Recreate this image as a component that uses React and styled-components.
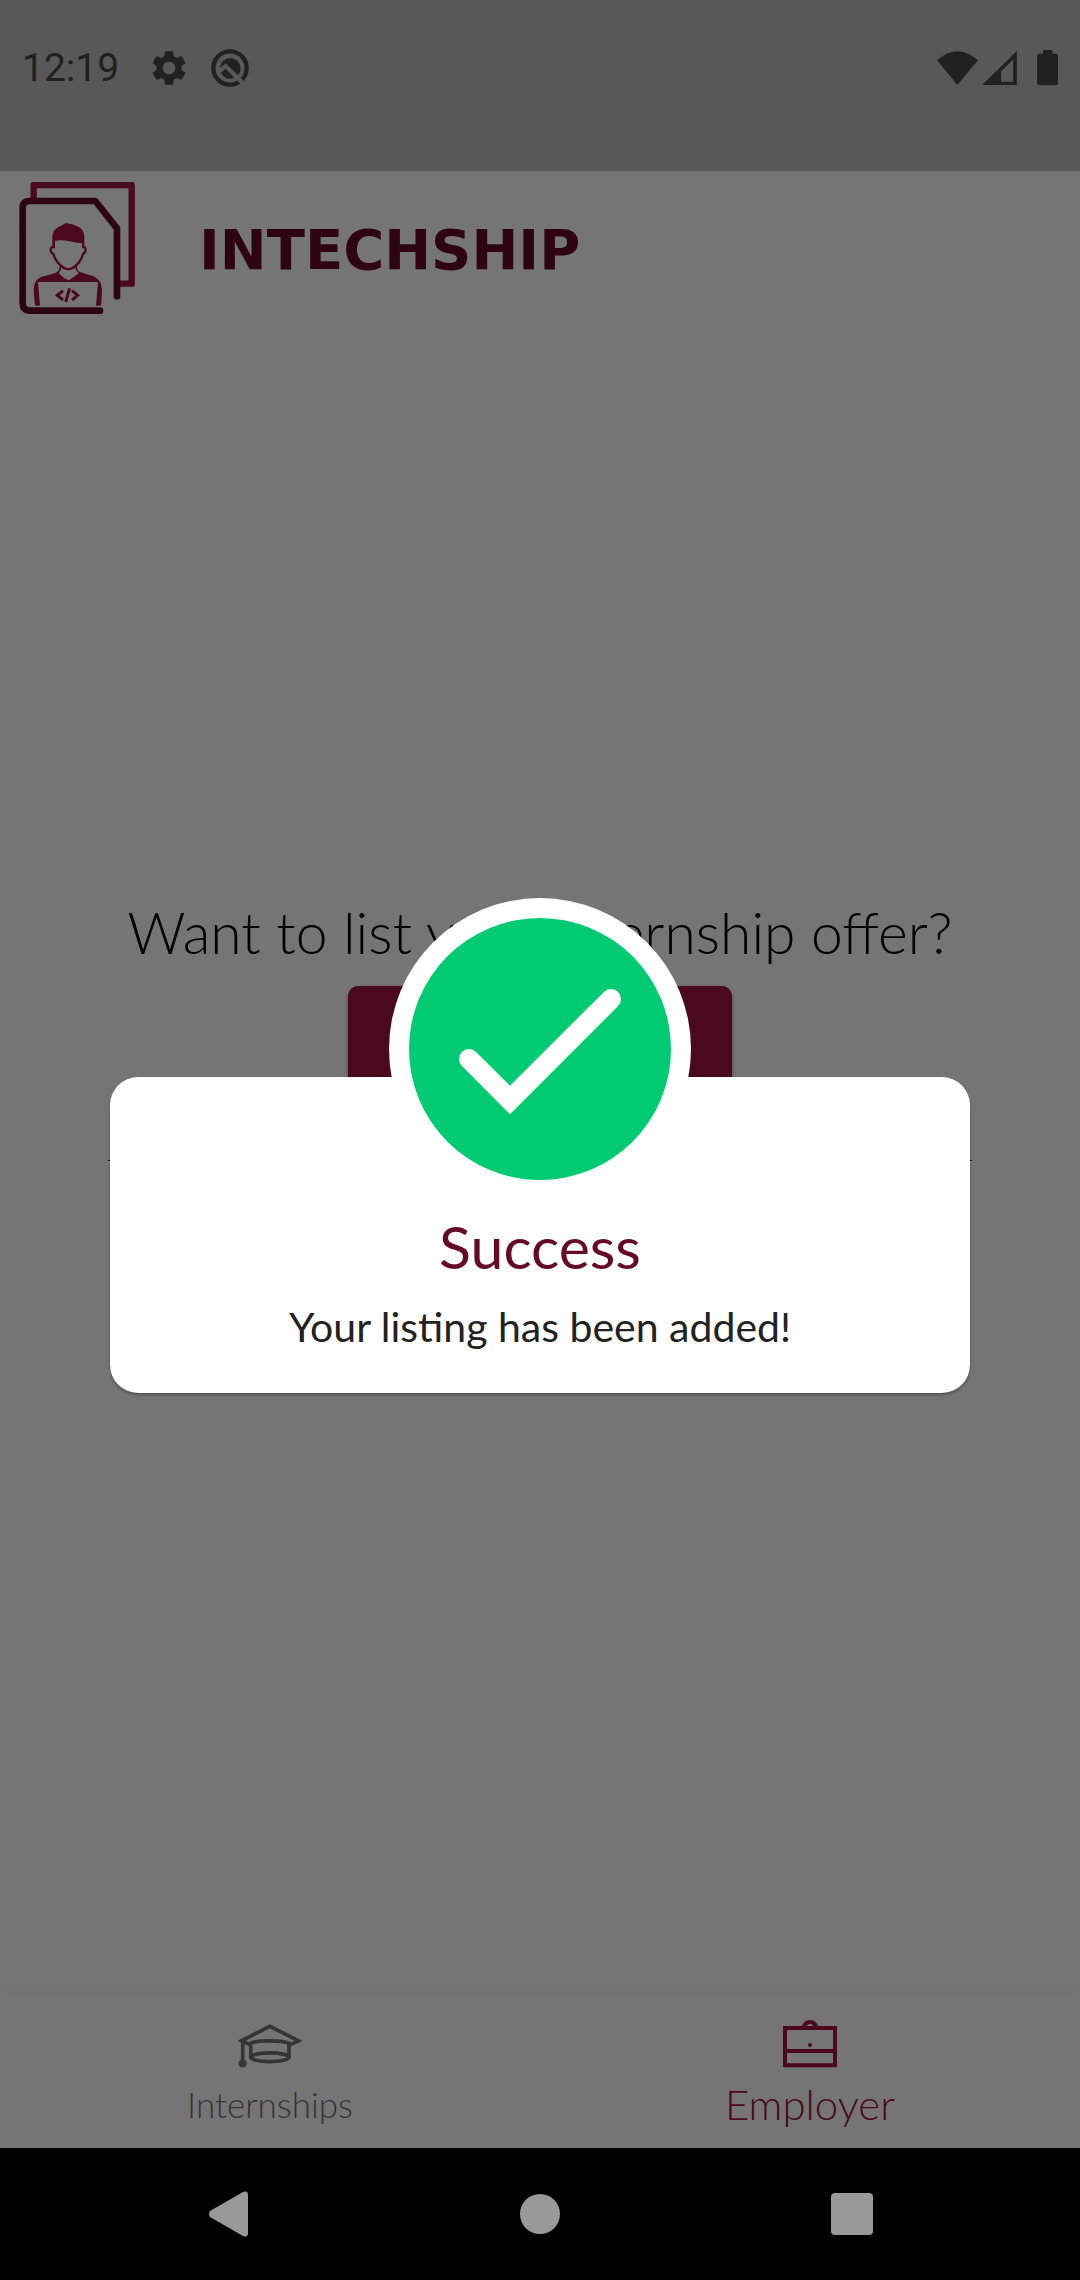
import React from "react";
import styled, { createGlobalStyle } from "styled-components";

const color = {
  ink: "#494949",
  statusBar: "#c0c0c0",
  primary: "#a2143f",
  dark: "#640a27",
  muted: "#747474",
  success: "#00cb72",
};

const GlobalStyle = createGlobalStyle`
  *, *::before, *::after { box-sizing: border-box; }
  body { margin: 0; background: #000; }
  body, button { font-family: Lato, "Open Sans", sans-serif; font-weight: 300; }
  h1, h2, p { margin: 0; font-weight: inherit; }
  button { border: 0; padding: 0; background: none; color: inherit; cursor: pointer; }
  svg { display: block; }
`;

const Device = styled.div`
  min-height: 100vh;
  display: flex;
  flex-direction: column;
`;

const Screen = styled.div`
  position: relative;
  flex: 1;
  display: flex;
  flex-direction: column;
  background: #fff;
`;

const StatusBar = styled.div`
  display: flex;
  justify-content: space-between;
  align-items: center;
  height: 171px;
  padding: 0 22px 36px;
  background: ${color.statusBar};
  color: ${color.ink};
`;

const StatusGroup = styled.div`
  display: flex;
  align-items: center;
  gap: ${(p) => p.$gap}px;
`;

const Clock = styled.time`
  margin-right: 8px;
  font: 400 39px/48px Roboto, sans-serif;
`;

const Header = styled.header`
  display: flex;
  align-items: center;
  gap: 64px;
  height: 156px;
  padding: 0 19px 2px;
`;

const Brand = styled.span`
  padding-top: 4px;
  font: 700 56px/64px "DejaVu Sans", sans-serif;
  color: ${color.dark};
`;

const Main = styled.main`
  flex: 1;
  display: grid;
  grid-template-rows: 1fr 1px 1fr;
  padding: 0 108px;
`;

const OfferPrompt = styled.section`
  display: flex;
  flex-direction: column;
  justify-content: flex-end;
  align-items: center;
  gap: 20px;
  padding-bottom: 44px;
`;

const PromptTitle = styled.h1`
  font-size: 57px;
  line-height: 68px;
  color: #000;
  white-space: nowrap;
`;

const ListButton = styled.button`
  width: 384px;
  height: 130px;
  border-radius: 10px;
  background: ${color.primary};
  box-shadow: 0 2px 4px rgba(0, 0, 0, 0.4);
`;

const Divider = styled.hr`
  width: 100%;
  height: 1px;
  margin: 0;
  border: 0;
  background: #222;
`;

const TabBar = styled.nav`
  display: grid;
  grid-template-columns: 1fr 1fr;
  height: 155px;
  background: #fff;
  box-shadow: 0 -4px 16px rgba(0, 0, 0, 0.04);
`;

const Tab = styled.button`
  display: flex;
  flex-direction: column;
  align-items: center;
  justify-content: flex-end;
  gap: 12px;
  padding-bottom: 20px;
  font-size: ${(p) => (p.$active ? 42 : 35)}px;
  line-height: 48px;
  color: ${(p) => (p.$active ? color.primary : color.muted)};
`;

const Scrim = styled.div`
  position: absolute;
  inset: 0;
  display: flex;
  align-items: center;
  justify-content: center;
  padding: 143px 110px 0;
  background: rgba(0, 0, 0, 0.54);
`;

const Dialog = styled.section`
  width: 100%;
  display: flex;
  flex-direction: column;
  align-items: center;
`;

const Badge = styled.div`
  z-index: 1;
  margin-bottom: -123px;
`;

const Card = styled.div`
  width: 100%;
  padding: 136px 24px 38px;
  border-radius: 28px;
  background: #fff;
  box-shadow: 0 2px 3px rgba(0, 0, 0, 0.3);
  text-align: center;
`;

const CardTitle = styled.h2`
  margin-bottom: 18px;
  font-size: 59px;
  font-weight: 400;
  line-height: 68px;
  color: ${color.dark};
`;

const CardText = styled.p`
  font-size: 41px;
  font-weight: 400;
  line-height: 56px;
  color: #222;
`;

const SystemBar = styled.nav`
  display: flex;
  align-items: center;
  justify-content: space-between;
  height: 132px;
  padding: 0 207px;
  background: #000;
`;

const SystemButton = styled.button`
  display: flex;
  justify-content: center;
  width: 42px;
  color: #999;
`;

const GearIcon = () => (
  <svg width="42" height="42" viewBox="0 0 24 24" fill="currentColor" aria-hidden="true">
    <path d="M19.14 12.94c.04-.3.06-.61.06-.94 0-.32-.02-.64-.07-.94l2.03-1.58c.18-.14.23-.41.12-.61l-1.92-3.32c-.12-.22-.37-.29-.59-.22l-2.39.96c-.5-.38-1.03-.7-1.62-.94l-.36-2.54c-.04-.24-.24-.41-.48-.41h-3.84c-.24 0-.43.17-.47.41l-.36 2.54c-.59.24-1.13.57-1.62.94l-2.39-.96c-.22-.08-.47 0-.59.22L2.74 8.87c-.12.21-.08.47.12.61l2.03 1.58c-.05.3-.09.63-.09.94s.02.64.07.94l-2.03 1.58c-.18.14-.23.41-.12.61l1.92 3.32c.12.22.37.29.59.22l2.39-.96c.5.38 1.03.7 1.62.94l.36 2.54c.05.24.24.41.48.41h3.84c.24 0 .44-.17.47-.41l.36-2.54c.59-.24 1.13-.56 1.62-.94l2.39.96c.22.08.47 0 .59-.22l1.92-3.32c.12-.22.07-.47-.12-.61l-2.01-1.58zM12 15.6c-1.98 0-3.6-1.62-3.6-3.6s1.62-3.6 3.6-3.6 3.6 1.62 3.6 3.6-1.62 3.6-3.6 3.6z" />
  </svg>
);

const DebugIcon = () => (
  <svg width="38" height="38" viewBox="0 0 114 114" fill="none" aria-hidden="true">
    <circle cx="57" cy="57" r="50" stroke="currentColor" strokeWidth="13" />
    <circle cx="58" cy="58" r="31" fill="currentColor" />
    <path d="M20 71 L44 51 L98 105" stroke={color.statusBar} strokeWidth="12" />
  </svg>
);

const WifiIcon = () => (
  <svg width="41" height="34" viewBox="0 0 123 102" fill="currentColor" aria-hidden="true">
    <path d="M0 28 Q61 -27 123 28 L61 102 Z" />
  </svg>
);

const SignalIcon = () => (
  <svg width="35" height="34" viewBox="0 0 104 102" fill="currentColor" aria-hidden="true">
    <path fillRule="evenodd" d="M104 0 V102 H0 Z M93 26 L57 61 V92 H93 Z" />
  </svg>
);

const BatteryIcon = () => (
  <svg width="21" height="36" viewBox="0 0 63 108" fill="currentColor" aria-hidden="true">
    <path d="M18 0 H46 V11 H57 Q63 11 63 17 V100 Q63 106 57 106 H6 Q0 106 0 100 V17 Q0 11 6 11 H18 Z" />
  </svg>
);

const LogoIcon = () => (
  <svg width="116" height="132" viewBox="57 51 348 396" fill="none" role="img" aria-label="Intechship logo">
    <path d="M101 100 V60 H395 V356 H360" stroke={color.primary} strokeWidth="19" strokeLinejoin="round" />
    <path d="M300 437 H88 Q68 434 68 416 V125 Q70 108 88 108 H286 L351 190 V394" stroke={color.dark} strokeWidth="20" strokeLinecap="round" strokeLinejoin="round" />
    <path d="M157 250 V211 Q160 190 184 182 L197 174 Q218 176 236 186 Q253 196 253 215 V250 L246 250 V235 Q225 234 209 229 Q185 223 165 227 V250 Z" fill={color.primary} />
    <path d="M160 245 Q148 248 154 262 L160 267 Q168 294 192 309 Q204 316 218 309 Q242 294 249 267 L255 262 Q260 248 250 245" stroke={color.primary} strokeWidth="7" />
    <path d="M178 302 Q181 317 166 324 L123 336 Q101 345 101 375 L104 416 Q104 422 110 422 H120 L114 351 H294 L288 422 H298 Q304 422 304 416 L306 375 Q305 345 281 334 L242 322 Q229 317 231 302 L225 305 Q227 317 236 325 Q220 338 206 346 Q190 340 176 325 Q184 317 184 307 Z" fill={color.primary} />
    <path d="M189 377 L172 391 L189 405 M216 377 L233 391 L216 405 M209 370 L197 411" stroke={color.primary} strokeWidth="9" />
  </svg>
);

const CapIcon = () => (
  <svg width="64" height="44" viewBox="235 135 191 131" fill="none" stroke="currentColor" strokeWidth="11" aria-hidden="true">
    <path d="M272 197 L245 185 L330 142 L416 185 L388 198" />
    <path d="M249 186 V250 M273 238 V192 Q290 185 330 185 Q370 185 387 192 V238" />
    <ellipse cx="330" cy="234" rx="57" ry="13" />
    <circle cx="249" cy="253" r="12" fill="currentColor" stroke="none" />
  </svg>
);

const BriefcaseIcon = () => (
  <svg width="54" height="48" viewBox="279 123 162 144" fill="none" stroke="currentColor" strokeWidth="12" aria-hidden="true">
    <path d="M285 147 H435 V259 H285 Z M285 216 H435" />
    <path d="M341 145 Q346 129 360 129 Q374 129 379 145" />
    <circle cx="360" cy="198" r="6" fill="currentColor" stroke="none" />
  </svg>
);

const SuccessIcon = () => (
  <svg width="302" height="302" viewBox="0 0 302 302" fill="none" aria-hidden="true">
    <circle cx="151" cy="151" r="151" fill="#fff" />
    <circle cx="151" cy="151" r="131" fill={color.success} />
    <path d="M80 161 L121 202 L222 101" stroke="#fff" strokeWidth="20" strokeLinecap="round" />
  </svg>
);

const BackIcon = () => (
  <svg width="39" height="46" viewBox="0 0 39 46" fill="currentColor" aria-hidden="true">
    <path d="M1 20 L34 1 Q39 -1 39 4 V42 Q39 47 34 45 L1 26 Q-1 23 1 20 Z" />
  </svg>
);

const HomeIcon = () => (
  <svg width="40" height="40" viewBox="0 0 40 40" fill="currentColor" aria-hidden="true">
    <circle cx="20" cy="20" r="20" />
  </svg>
);

const RecentsIcon = () => (
  <svg width="42" height="42" viewBox="0 0 42 42" fill="currentColor" aria-hidden="true">
    <rect width="42" height="42" rx="4" />
  </svg>
);

export default function App() {
  return (
    <Device>
      <GlobalStyle />
      <Screen>
        <StatusBar>
          <StatusGroup $gap={21}>
            <Clock>12:19</Clock>
            <GearIcon />
            <DebugIcon />
          </StatusGroup>
          <StatusGroup $gap={20}>
            <StatusGroup $gap={4}>
              <WifiIcon />
              <SignalIcon />
            </StatusGroup>
            <BatteryIcon />
          </StatusGroup>
        </StatusBar>
        <Header>
          <LogoIcon />
          <Brand>INTECHSHIP</Brand>
        </Header>
        <Main>
          <OfferPrompt>
            <PromptTitle>Want to list your internship offer?</PromptTitle>
            <ListButton type="button" aria-label="Add listing" />
          </OfferPrompt>
          <Divider />
        </Main>
        <TabBar>
          <Tab type="button">
            <CapIcon />
            Internships
          </Tab>
          <Tab type="button" $active aria-current="page">
            <BriefcaseIcon />
            Employer
          </Tab>
        </TabBar>
        <Scrim>
          <Dialog role="dialog" aria-labelledby="dialog-title">
            <Badge>
              <SuccessIcon />
            </Badge>
            <Card>
              <CardTitle id="dialog-title">Success</CardTitle>
              <CardText>Your listing has been added!</CardText>
            </Card>
          </Dialog>
        </Scrim>
      </Screen>
      <SystemBar>
        <SystemButton type="button" aria-label="Back">
          <BackIcon />
        </SystemButton>
        <SystemButton type="button" aria-label="Home">
          <HomeIcon />
        </SystemButton>
        <SystemButton type="button" aria-label="Recent apps">
          <RecentsIcon />
        </SystemButton>
      </SystemBar>
    </Device>
  );
}
